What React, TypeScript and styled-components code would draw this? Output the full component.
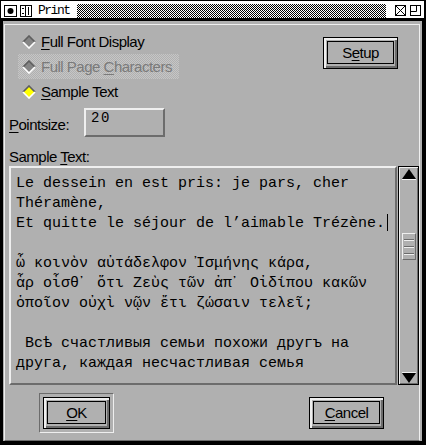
import React from 'react';
import styled, { createGlobalStyle } from 'styled-components';

const GRAY = '#b0b0b0';
const LIGHT = '#efefef';
const DARK = '#6c6c6c';
const SANS = '"Liberation Sans", Arial, Helvetica, sans-serif';
const MONO = '"Liberation Mono", "DejaVu Sans Mono", "Courier New", monospace';

const Global = createGlobalStyle`
  html, body { margin: 0; padding: 0; background: #000; }
  body { font-family: ${SANS}; }
  * { box-sizing: border-box; }
`;

const Window = styled.div`
  width: 426px;
  height: 445px;
  display: flex;
  flex-direction: column;
  overflow: hidden;
`;

const TitleBar = styled.div`
  height: 18px;
  flex: none;
  background: #fff;
  border-style: solid;
  border-color: #000;
  border-width: 1px 2px 0 1px;
  display: flex;
  align-items: center;
  padding: 2px 3px 0 3px;
`;

const TitleIcon = styled.svg<{ $gap?: number }>`
  display: block;
  flex: none;
  margin-right: ${(p) => p.$gap ?? 0}px;
`;

const TitleText = styled.span`
  font-family: ${MONO};
  font-size: 13px;
  line-height: 14px;
  letter-spacing: -1.5px;
  color: #000;
  width: 30px;
  flex: none;
  white-space: nowrap;
`;

const Hatch = styled.div`
  flex: 1;
  height: 14px;
  margin: 0 9px;
  background-image: repeating-conic-gradient(#000 0% 25%, #fff 0% 50%);
  background-size: 2px 2px;
`;

const Frame = styled.div`
  flex: 1;
  display: flex;
  border-style: solid;
  border-color: #000;
  border-width: 3px 4px 4px 3px;
  background: ${GRAY};
  padding: 3px 2px 0 1px;
  min-height: 0;
`;

const Panel = styled.div`
  flex: 1;
  display: flex;
  flex-direction: column;
  border: 1px solid ${LIGHT};
  border-bottom-color: ${DARK};
  min-width: 0;
  color: #000;
  font-family: ${SANS};
  font-size: 15px;
  letter-spacing: -0.5px;
`;

const TopSection = styled.div`
  display: flex;
  justify-content: space-between;
  align-items: flex-start;
`;

const RadioGroup = styled.div`
  display: flex;
  flex-direction: column;
  align-items: flex-start;
  margin: 4px 0 0 13px;
`;

const RadioRow = styled.div<{ $disabled?: boolean }>`
  height: 25px;
  display: flex;
  align-items: center;
  gap: 5px;
  padding: 0 7px 0 4px;
  line-height: 18px;
  color: ${(p) => (p.$disabled ? '#7a7a7a' : '#000')};
  background: ${(p) =>
    p.$disabled
      ? `repeating-conic-gradient(#c6c6c6 0% 25%, ${GRAY} 0% 50%) 0 0 / 2px 2px`
      : 'transparent'};
`;

const U = styled.span`
  text-decoration: underline;
  text-underline-offset: 2px;
`;

const Button = styled.button<{ $w: number }>`
  width: ${(p) => p.$w}px;
  height: 32px;
  flex: none;
  border: 1px solid #000;
  background: ${GRAY};
  box-shadow: inset 2px 2px 0 ${LIGHT}, inset -2px -2px 0 ${DARK};
  padding: 3px 3px 4px 3px;
  display: flex;
  margin: 0;
  font: inherit;
  letter-spacing: inherit;
  color: #000;
`;

const Face = styled.span`
  flex: 1;
  border: 1px solid #000;
  display: flex;
  align-items: center;
  justify-content: center;
  line-height: 18px;
`;

const SetupWrap = styled.div`
  margin: 12px 21px 0 0;
`;

const PointRow = styled.div`
  display: flex;
  align-items: flex-start;
  margin: 4px 0 0 4px;
`;

const FieldLabel = styled.div<{ $w?: number }>`
  width: ${(p) => (p.$w ? `${p.$w}px` : 'auto')};
  line-height: 18px;
`;

const PointLabel = styled(FieldLabel)`
  margin-top: 8px;
`;

const SampleLabel = styled(FieldLabel)`
  margin: 11px 0 0 4px;
`;

const Entry = styled.div`
  width: 81px;
  height: 29px;
  border: 2px solid;
  border-color: ${LIGHT} ${DARK} ${DARK} ${LIGHT};
  padding: 0 5px;
  font-family: ${MONO};
  font-size: 14px;
  line-height: 16px;
  letter-spacing: 1.6px;
`;

const EditorRow = styled.div`
  display: flex;
  height: 219px;
  margin-left: 4px;
`;

const TextArea = styled.div`
  flex: 1;
  min-width: 0;
  border: 2px solid;
  border-color: ${LIGHT} ${DARK} ${DARK} ${LIGHT};
  padding: 6px 0 0 5px;
  font-family: ${MONO};
  font-size: 15px;
  line-height: 20px;
  letter-spacing: 0;
  overflow: hidden;
`;

const Line = styled.div`
  height: 20px;
  white-space: pre;
`;

const Cursor = styled.span`
  display: inline-block;
  width: 1px;
  height: 17px;
  background: #000;
  vertical-align: -4px;
  margin-left: 2px;
`;

const Scrollbar = styled.div`
  width: 21px;
  margin-left: 1px;
  border: 1px solid #000;
  box-shadow: inset 1px 1px 0 ${LIGHT}, inset -1px -1px 0 ${DARK};
  display: flex;
  flex-direction: column;
  align-items: center;
  padding: 2px 0 1px;
`;

const Arrow = styled.svg`
  display: block;
  flex: none;
`;

const Trough = styled.div`
  flex: 1;
  display: flex;
  flex-direction: column;
  align-items: center;
`;

const Thumb = styled.div`
  width: 14px;
  height: 27px;
  margin-top: 53px;
  border: 1px solid;
  border-color: ${LIGHT} ${DARK} ${DARK} ${LIGHT};
  display: flex;
  flex-direction: column;
  align-items: center;
  justify-content: center;
  gap: 5px;
`;

const Grip = styled.div`
  width: 10px;
  height: 2px;
  border-top: 1px solid ${DARK};
  border-bottom: 1px solid ${LIGHT};
`;

const ButtonRow = styled.div`
  display: flex;
  justify-content: space-between;
  align-items: center;
  margin: 8px 35px 0 34px;
`;

const DefaultRing = styled.div`
  border: 1px solid;
  border-color: ${DARK} ${LIGHT} ${LIGHT} ${DARK};
  padding: 3px;
  display: flex;
`;

const Diamond = ({ selected }: { selected?: boolean }) => (
  <svg width="14" height="14" viewBox="0 0 14 14" style={{ display: 'block', flex: 'none' }}>
    <polygon points="7,1 13,7 7,13 1,7" fill={selected ? '#ffff00' : '#858585'} />
    <polyline points="1,7 7,1 13,7" fill="none" stroke="#5e5e5e" strokeWidth="1.6" />
    <polyline points="1,7 7,13 13,7" fill="none" stroke="#ffffff" strokeWidth="1.6" />
  </svg>
);

const lines = [
  'Le dessein en est pris: je pars, cher',
  'Théramène,',
  'Et quitte le séjour de l’aimable Trézène.',
  '',
  'ὦ κοινὸν αὐτάδελφον Ἰσμήνης κάρα,',
  'ἆρ οἶσθ᾽ ὅτι Ζεὺς τῶν ἀπ᾽ Οἰδίπου κακῶν',
  'ὁποῖον οὐχὶ νῷν ἔτι ζώσαιν τελεῖ;',
  '',
  ' Всѣ счастливыя семьи похожи другъ на',
  'друга, каждая несчастливая семья',
];

export default function App() {
  return (
    <>
      <Global />
      <Window>
        <TitleBar>
          <TitleIcon width="13" height="12" viewBox="0 0 13 12" $gap={3}>
            <rect x="0.5" y="0.5" width="12" height="11" fill="#fff" stroke="#000" />
            <circle cx="6.5" cy="6" r="3" fill="#000" />
          </TitleIcon>
          <TitleIcon width="12" height="12" viewBox="0 0 12 12" $gap={6}>
            <rect x="0.5" y="0.5" width="11" height="11" fill="#fff" stroke="#000" />
            <line x1="5.5" y1="0" x2="5.5" y2="12" stroke="#000" />
            <line x1="8.5" y1="2" x2="8.5" y2="10" stroke="#000" />
            <line x1="2" y1="3.5" x2="4" y2="3.5" stroke="#000" />
            <line x1="2" y1="8.5" x2="4" y2="8.5" stroke="#000" />
          </TitleIcon>
          <TitleText>Print</TitleText>
          <Hatch />
          <TitleIcon width="11" height="11" viewBox="0 0 11 11" $gap={4}>
            <rect x="0.5" y="0.5" width="10" height="10" fill="#fff" stroke="#000" />
            <line x1="1" y1="1" x2="10" y2="10" stroke="#000" />
            <line x1="10" y1="1" x2="1" y2="10" stroke="#000" />
          </TitleIcon>
          <TitleIcon width="11" height="11" viewBox="0 0 11 11">
            <rect x="0.5" y="0.5" width="10" height="10" fill="#fff" stroke="#000" />
            <path d="M0.5 6.5 H6.5 V0.5" fill="none" stroke="#000" />
          </TitleIcon>
        </TitleBar>
        <Frame>
          <Panel>
            <TopSection>
              <RadioGroup>
                <RadioRow>
                  <Diamond />
                  <span>
                    <U>F</U>ull Font Display
                  </span>
                </RadioRow>
                <RadioRow $disabled>
                  <Diamond />
                  <span>
                    Full Page <U>C</U>haracters
                  </span>
                </RadioRow>
                <RadioRow>
                  <Diamond selected />
                  <span>
                    <U>S</U>ample Text
                  </span>
                </RadioRow>
              </RadioGroup>
              <SetupWrap>
                <Button $w={75}>
                  <Face>
                    S<U>e</U>tup
                  </Face>
                </Button>
              </SetupWrap>
            </TopSection>
            <PointRow>
              <PointLabel $w={75}>
                <U>P</U>ointsize:
              </PointLabel>
              <Entry>20</Entry>
            </PointRow>
            <SampleLabel>
              Sample <U>T</U>ext:
            </SampleLabel>
            <EditorRow>
              <TextArea>
                {lines.map((l, i) => (
                  <Line key={i}>
                    {l}
                    {i === 2 && <Cursor />}
                  </Line>
                ))}
              </TextArea>
              <Scrollbar>
                <Arrow width="14" height="11" viewBox="0 0 14 11">
                  <polygon points="7,0 14,10 0,10" fill="#000" />
                  <line x1="0" y1="10.5" x2="14" y2="10.5" stroke={LIGHT} />
                </Arrow>
                <Trough>
                  <Thumb>
                    <Grip />
                    <Grip />
                    <Grip />
                  </Thumb>
                </Trough>
                <Arrow width="14" height="11" viewBox="0 0 14 11">
                  <line x1="0" y1="0.5" x2="14" y2="0.5" stroke={LIGHT} />
                  <polygon points="0,1 14,1 7,11" fill="#000" />
                </Arrow>
              </Scrollbar>
            </EditorRow>
            <ButtonRow>
              <DefaultRing>
                <Button $w={67}>
                  <Face>
                    <U>O</U>K
                  </Face>
                </Button>
              </DefaultRing>
              <Button $w={75}>
                <Face>
                  <U>C</U>ancel
                </Face>
              </Button>
            </ButtonRow>
          </Panel>
        </Frame>
      </Window>
    </>
  );
}
